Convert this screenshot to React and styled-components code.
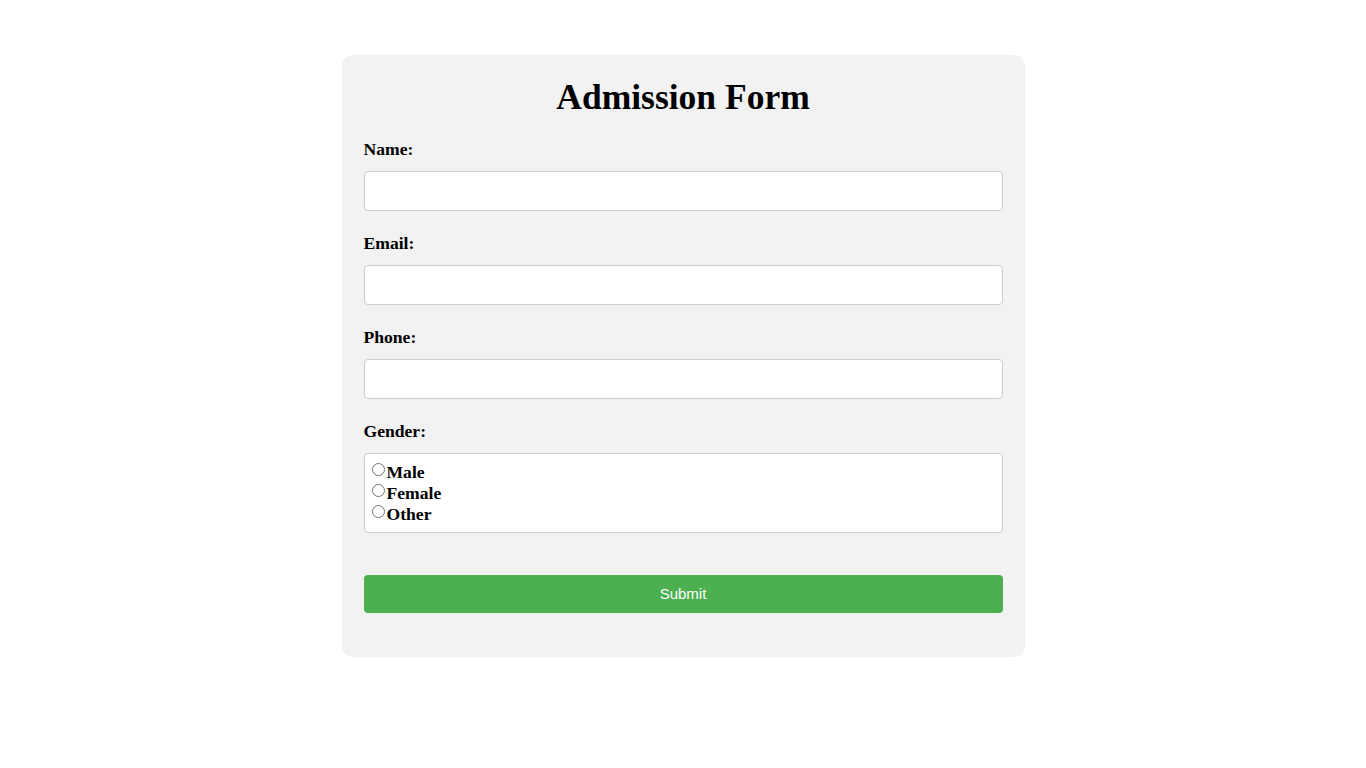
import React from 'react';
import styled, { createGlobalStyle } from 'styled-components';

const GlobalStyle = createGlobalStyle`
    body {
        margin: 0;
        background: #fff;
        font-family: "Liberation Serif", "Times New Roman", serif;
    }
`;

const fields = [
    { id: 'name', label: 'Name:', type: 'text' },
    { id: 'email', label: 'Email:', type: 'email' },
    { id: 'phone', label: 'Phone:', type: 'tel' },
];

const genders = ['Male', 'Female', 'Other'];

const App = () => (
    <Page>
        <GlobalStyle />
        <FormCard>
            <Title>Admission Form</Title>
            {fields.map(field => (
                <Field key={field.id}>
                    <Label htmlFor={field.id}>{field.label}</Label>
                    <TextInput id={field.id} type={field.type} />
                </Field>
            ))}
            <Field>
                <Label>Gender:</Label>
                <RadioBox>
                    {genders.map(g => (
                        <RadioRow key={g}>
                            <Radio type="radio" name="gender" value={g.toLowerCase()} />
                            <RadioText>{g}</RadioText>
                        </RadioRow>
                    ))}
                </RadioBox>
            </Field>
            <SubmitButton type="button">Submit</SubmitButton>
        </FormCard>
    </Page>
);

export default App;

const Page = styled.div`
    padding-top: 55px;
    min-height: 768px;
    box-sizing: border-box;
`;

const FormCard = styled.form`
    width: 683px;
    margin: 0 auto;
    padding: 22px;
    box-sizing: border-box;
    background: #f2f2f2;
    border-radius: 10px;
`;

const Title = styled.h1`
    margin: 0 0 22px;
    font-size: 35.5px;
    line-height: 40px;
    text-align: center;
    color: #000;
`;

const Field = styled.div`
    margin-bottom: 22px;
`;

const Label = styled.label`
    display: block;
    font-weight: bold;
    font-size: 17.6px;
    line-height: 20px;
    margin-bottom: 12px;
`;

const TextInput = styled.input`
    display: block;
    width: 100%;
    height: 40px;
    box-sizing: border-box;
    padding: 10px;
    border: 1px solid #ccc;
    border-radius: 4px;
    background: #fff;
    font-size: 16px;
    outline: none;
`;

const RadioBox = styled.div`
    height: 80px;
    box-sizing: border-box;
    padding: 7px 7px;
    border: 1px solid #ccc;
    border-radius: 4px;
    background: #fff;
`;

const RadioRow = styled.label`
    display: flex;
    align-items: flex-start;
    height: 21px;
`;

const Radio = styled.input`
    margin: 2px 2px 0 0;
    width: 13px;
    height: 13px;
`;

const RadioText = styled.span`
    font-weight: bold;
    font-size: 17.6px;
    line-height: 22px;
`;

const SubmitButton = styled.button`
    display: block;
    width: 100%;
    height: 38px;
    margin-top: 42px;
    margin-bottom: 22px;
    padding: 0 0 2px;
    border: none;
    border-radius: 4px;
    background: #4caf50;
    color: #fff;
    font-family: "Liberation Sans", Arial, sans-serif;
    font-size: 15px;
    cursor: pointer;
`;
